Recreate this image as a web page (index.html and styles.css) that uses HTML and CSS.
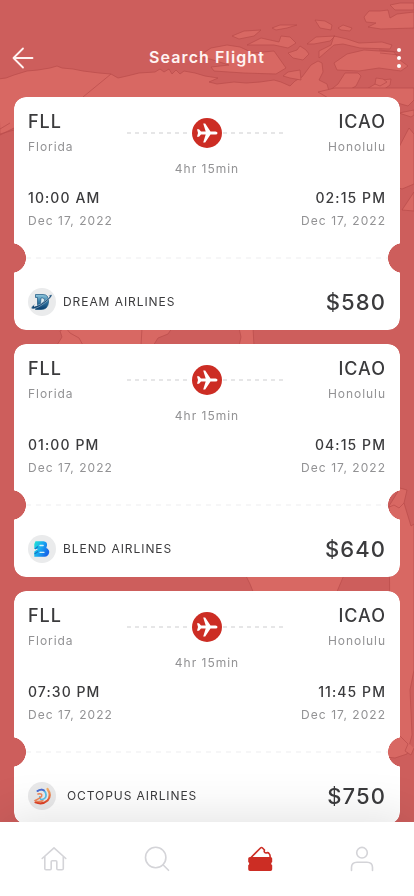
FILE: index.html
```
<!DOCTYPE html>
<html lang="en">
<head>
<meta charset="utf-8">
<meta name="viewport" content="width=device-width, initial-scale=1">
<title>Search Flight</title>
<link rel="stylesheet" href="styles.css">
</head>
<body>
<svg class="map" viewBox="0 0 414 896" aria-hidden="true">
  <path d="M-2 79L6 78L14 75L27 71L38 70L50 68L57 66L62 68L73 69L83 71L99 73L111 74L118 78L127 76L139 73L155 72L160 69L164 72L169 69L172 74L176 70L180 74L184 71L195 73L205 76L218 78L209 82L217 84L234 82L246 83L260 82L274 80L281 82L290 86L295 81L302 77L311 65L318 61L322 63L323 72L319 80L327 84L329 91L338 84L345 73L358 73L361 76L356 86L342 94L350 97L365 90L382 80L391 79L390 85L383 90L371 96L371 103L345 112L325 103L120 103L80 100L30 120L0 135Z"/>
  <path d="M111 74L83 97M0 129L10 123M0 134L14 130"/>
  <path d="M232 36L244 31L261 30L254 36L239 39ZM272 28L280 25L297 25L287 28L276 30ZM315 20L325 21L332 25L331 30L320 28ZM338 28L343 25L352 28L350 31L341 30Z"/>
  <path d="M364 17L369 11L380 11L388 10L390 18L397 14L414 12V28L381 29L368 27L376 23L366 22ZM390 5L400 3H414V10L395 10Z"/>
  <path d="M211 48L227 45L240 47L253 53L274 51L286 68L276 74L244 73L214 71L211 67L229 65L210 59L197 57L205 52ZM247 45L261 38L279 42L281 36L290 37L296 43L288 48L274 45ZM288 53L297 50L300 46L306 50L309 54L303 60L293 58ZM307 44L316 37L335 36L330 41L314 44ZM334 36L347 39L359 43L382 42L392 45L390 49L360 48L343 44L334 45L319 58L319 51L331 45ZM283 76L288 72L300 70L301 80L290 78Z"/>
  <path d="M334 63L347 54L364 50L394 52L400 60L408 66L401 71L379 68L359 71L337 70ZM375 84L376 78L383 79L387 82L380 86ZM379 50L398 52M380 53L400 55"/>
  <path d="M394 102L376 99L330 99L318 92L335 88H414V100L408 106Z"/>
  <path d="M398 149L409 128L414 134V184L402 189L396 187ZM402 210L414 192V211ZM399 113L411 117L414 115V110Z"/>
  <path d="M57 345L62 337L60 331L65 328H172L168 334L158 338L153 346ZM239 328L241 337L239 346H254L253 328Z"/>
  <path d="M66 328L70 333L79 338L84 347M142 328L141 346"/>
  <path d="M389 506L394 498L400 488L407 490L404 503L411 526L414 524V670L410 690L412 735L407 754L395 758L386 757L382 730L390 650ZM245 574L250 584L254 594H336L344 575Z"/>
  <path d="M387 508L394 505L399 508L404 503M399 735L408 744L405 751L411 755L414 748"/>
</svg>

<header class="topbar">
  <svg class="back" viewBox="0 0 22 22"><path d="M20.5 11H1.500M11 1.500L1.500 11L11 20.500"/></svg>
  <h1>Search Flight</h1>
  <svg class="more" viewBox="0 0 4 20"><circle cx="2" cy="2" r="2"/><circle cx="2" cy="10" r="2"/><circle cx="2" cy="18" r="2"/></svg>
</header>

<main class="list">
  <article class="ticket">
    <div class="trip">
      <div class="end"><div class="code">FLL</div><div class="city">Florida</div><div class="time">10:00 AM</div><div class="date">Dec 17, 2022</div></div>
      <div class="mid"><div class="route"><i class="dash"></i><svg class="plane" viewBox="0 0 30 30"><use href="#plane"/></svg><i class="dash"></i></div><div class="duration">4hr 15min</div></div>
      <div class="end to"><div class="code">ICAO</div><div class="city">Honolulu</div><div class="time">02:15 PM</div><div class="date">Dec 17, 2022</div></div>
    </div>
    <div class="tear"></div>
    <div class="foot">
      <svg class="logo" viewBox="0 0 28 28"><defs><linearGradient id="d" x2="0" y2="1"><stop stop-color="#91c9df"/><stop offset=".45" stop-color="#397fa9"/><stop offset="1" stop-color="#073b6c"/></linearGradient></defs><circle cx="14" cy="14" r="14" fill="#eaebec"/><path d="M7.500 6.500H15Q21 6.500 20.500 14Q20 21.500 13 21.500H7.500V18.500H9.500V9.500H7.500Z" fill="url(#d)" stroke="#16517d" stroke-width=".7"/><path d="M13 10H14.500Q17 10 16.500 13L12.500 16.500Z" fill="#dcecf2" stroke="#16517d" stroke-width=".6"/><path d="M7.500 15.500Q2.500 19 3.500 20.500Q6 22 13 17.500Q22 11.500 24 7.500Q24 6 20.500 7.800Q23 8 19.500 11Q12 17.500 6.500 18.500Q5 18.500 7.500 15.500Z" fill="#124672" stroke="#eaf1f4" stroke-width=".4"/></svg>
      <span class="airline">DREAM AIRLINES</span><span class="price">$580</span>
    </div>
  </article>

  <article class="ticket">
    <div class="trip">
      <div class="end"><div class="code">FLL</div><div class="city">Florida</div><div class="time">01:00 PM</div><div class="date">Dec 17, 2022</div></div>
      <div class="mid"><div class="route"><i class="dash"></i><svg class="plane" viewBox="0 0 30 30"><use href="#plane"/></svg><i class="dash"></i></div><div class="duration">4hr 15min</div></div>
      <div class="end to"><div class="code">ICAO</div><div class="city">Honolulu</div><div class="time">04:15 PM</div><div class="date">Dec 17, 2022</div></div>
    </div>
    <div class="tear"></div>
    <div class="foot">
      <svg class="logo" viewBox="0 0 28 28"><defs><linearGradient id="b" x2="1" y2=".5"><stop stop-color="#20e6d3"/><stop offset=".5" stop-color="#18aaf0"/><stop offset="1" stop-color="#1767e8"/></linearGradient></defs><circle cx="14" cy="14" r="14" fill="#eaebec"/><path d="M7.500 6.200H15.500Q19.500 6.500 19 10.500L18.300 13Q21.500 14.500 21.200 17.500Q20.500 21.500 16.500 21.800H6.300V16.500L10 14H6.300V9Z" fill="url(#b)"/><path d="M12 10.500H15.200M12 17.300H16" stroke="#d4f1fb" stroke-width="1.300" stroke-linecap="round"/><path d="M7 14L10 11.500M6.500 19L10 16.500" stroke="#1676c9" stroke-width="1.200"/></svg>
      <span class="airline">BLEND AIRLINES</span><span class="price">$640</span>
    </div>
  </article>

  <article class="ticket">
    <div class="trip">
      <div class="end"><div class="code">FLL</div><div class="city">Florida</div><div class="time">07:30 PM</div><div class="date">Dec 17, 2022</div></div>
      <div class="mid"><div class="route"><i class="dash"></i><svg class="plane" viewBox="0 0 30 30"><use href="#plane"/></svg><i class="dash"></i></div><div class="duration">4hr 15min</div></div>
      <div class="end to"><div class="code">ICAO</div><div class="city">Honolulu</div><div class="time">11:45 PM</div><div class="date">Dec 17, 2022</div></div>
    </div>
    <div class="tear"></div>
    <div class="foot wide">
      <svg class="logo" viewBox="0 0 28 28"><defs><linearGradient id="o" x2="0" y2="1"><stop stop-color="#f4ad65"/><stop offset="1" stop-color="#dd3f26"/></linearGradient></defs><circle cx="14" cy="14" r="14" fill="#e9e9ea"/><g fill="none" stroke-linecap="round"><path d="M19.500 7Q24 13.500 19.500 18.500Q14.500 23 7.500 20.300" stroke="url(#o)" stroke-width="2.200"/><path d="M9.500 9Q15 5.500 17.500 10.500Q19.500 16 14.500 17.500Q12 18 11.800 15" stroke="#55bfe9" stroke-width="1.800"/><path d="M9.500 9Q13 6.500 16 8.500" stroke="#5369ce" stroke-width="1.800"/><path d="M10 12Q15 11 13.500 14.500Q11 17 7.200 18.500Q10 20.500 15 18.700" stroke="#ef8557" stroke-width="1.500"/></g></svg>
      <span class="airline">OCTOPUS AIRLINES</span><span class="price">$750</span>
    </div>
  </article>
</main>

<nav class="tabs">
  <svg viewBox="0 0 26 26"><path d="M1.200 12.500L13 1.800L24.800 12.500M3.800 10.500V22.500Q3.800 23.800 5 23.800H9.200Q10.200 23.800 10.200 22.500V15.800Q10.200 14.800 11.200 14.800H14.800Q15.800 14.800 15.800 15.800V22.500Q15.800 23.800 17 23.800H21Q22.300 23.800 22.300 22.500V10.500"/></svg>
  <svg viewBox="0 0 26 26"><circle cx="11.700" cy="11.500" r="10.200"/><path d="M19 18.800L24.500 24.300"/></svg>
  <svg class="active" viewBox="0 0 26 26"><path class="outline" d="M4 11.500L13.500 2Q14.500 1 15.500 2L17.500 4Q16.500 6.500 19 7Q21 6 22 7.500Q23.500 9 23 11.500"/><path class="solid" d="M3 11H23.500Q25.200 11 25.200 12.500V16Q23.200 17.700 25.200 19.300V23.200Q25.200 25 23.500 25H3Q1.200 25 1.200 23.200V19.300Q3.200 17.700 1.200 16V12.500Q1.200 11 3 11Z"/></svg>
  <svg viewBox="0 0 26 26"><circle cx="13" cy="6.700" r="5.300"/><path d="M2.500 24.500V21.500Q2.500 16.200 8 16.200H18Q23.500 16.200 23.500 21.500V24.500"/></svg>
</nav>

<svg class="symbols" width="0" height="0"><symbol id="plane" viewBox="0 0 30 30"><circle cx="15" cy="15" r="15" fill="#cc2d24"/><path d="M25.500 15Q25.500 16.500 23.500 16.500H18.500L13.200 24.500H11.200L13.700 16.500H9L7 18.800H5L6 15L5 11.200H7L9 13.500H13.700L11.200 5.500H13.200L18.500 13.500H23.500Q25.500 13.500 25.500 15Z" fill="#fff"/></symbol></svg>
</body>
</html>
```
FILE: styles.css
```
* { box-sizing: border-box; }

body {
  margin: 0;
  height: 896px;
  overflow: hidden;
  display: flex;
  flex-direction: column;
  background: #cd5e5c;
  font-family: Inter, "Liberation Sans", sans-serif;
  color: #3b3b3d;
}

svg { display: block; flex: none; }

.map {
  position: absolute;
  inset: 0;
  width: 414px;
  height: 896px;
  z-index: -1;
  fill: #d86863;
  stroke: #b94c4b;
  stroke-width: .7;
}

.topbar {
  height: 97px;
  flex: none;
  padding: 36px 13px 18px 12px;
  display: grid;
  grid-template-columns: 22px 1fr 4px;
  align-items: center;
}

.topbar h1 {
  margin: 0 17px 2px 0;
  text-align: center;
  font-size: 16px;
  line-height: 24px;
  font-weight: 600;
  letter-spacing: 1.1px;
  color: #fff3f2;
}

.back {
  width: 22px;
  height: 22px;
  fill: none;
  stroke: #fff3f2;
  stroke-width: 1.8;
  stroke-linecap: round;
  stroke-linejoin: round;
}

.more { width: 4px; height: 20px; fill: #fff; }

.list {
  height: 725px;
  flex: none;
  overflow: hidden;
  padding: 0 14px;
  display: flex;
  flex-direction: column;
  gap: 14px;
}

.ticket {
  height: 233px;
  flex: none;
  padding: 14px 14px 0;
  border-radius: 12px;
  background: #fff;
  -webkit-mask: radial-gradient(circle at -3px 161px, transparent 14.6px, #000 15.2px) left / 50% 100% no-repeat,
    radial-gradient(circle at calc(100% + 3px) 161px, transparent 14.6px, #000 15.2px) right / 50% 100% no-repeat;
  mask: radial-gradient(circle at -3px 161px, transparent 14.6px, #000 15.2px) left / 50% 100% no-repeat,
    radial-gradient(circle at calc(100% + 3px) 161px, transparent 14.6px, #000 15.2px) right / 50% 100% no-repeat;
}

.trip { display: grid; grid-template-columns: 1fr 160px 1fr; height: 146px; }

.end, .duration { white-space: nowrap; }
.to { text-align: right; }

.code { font-size: 18px; line-height: 22px; letter-spacing: 1px; font-weight: 500; }
.city, .date, .duration { font-size: 12px; line-height: 18px; letter-spacing: 1px; color: #929294; }
.city { margin-top: 5px; letter-spacing: .95px; }
.time { margin-top: 32px; font-size: 14px; line-height: 20px; letter-spacing: 1.08px; font-weight: 500; }
.date { margin-top: 4px; letter-spacing: 1.04px; }

.mid { padding-top: 7px; }
.route { display: flex; align-items: center; gap: 1px; }
.plane { width: 30px; height: 30px; }
.dash {
  flex: 1;
  height: 2px;
  background: repeating-linear-gradient(90deg, #e6e6e7 0 4px, transparent 4px 8px);
}
.duration { margin-top: 12px; text-align: center; letter-spacing: 1px; }

.tear {
  height: 2px;
  margin: 0 -2px;
  background: repeating-linear-gradient(90deg, #f6f6f7 0 5px, transparent 5px 10px);
}

.foot { margin-top: 29px; height: 28px; display: flex; align-items: center; gap: 7px; }
.foot.wide { gap: 11px; }
.logo { width: 28px; height: 28px; }
.airline { font-size: 12px; line-height: 18px; letter-spacing: .93px; }
.price { margin-left: auto; font-size: 22px; line-height: 28px; letter-spacing: 1.1px; font-weight: 500; }

.tabs {
  position: relative;
  height: 74px;
  flex: none;
  padding: 0 39px 0 41px;
  display: flex;
  align-items: center;
  justify-content: space-between;
  background: #fff;
  box-shadow: 0 -4px 50px rgba(0, 0, 0, .12);
}
.tabs svg {
  width: 26px;
  height: 26px;
  fill: none;
  stroke: #d4d4d8;
  stroke-width: 1.6;
  stroke-linecap: round;
  stroke-linejoin: round;
}
.tabs .active { stroke: #cc2d24; margin: 0 -1px 0 1px; }
.active .solid { fill: #cc2d24; stroke: none; }
.symbols { position: absolute; }
```
